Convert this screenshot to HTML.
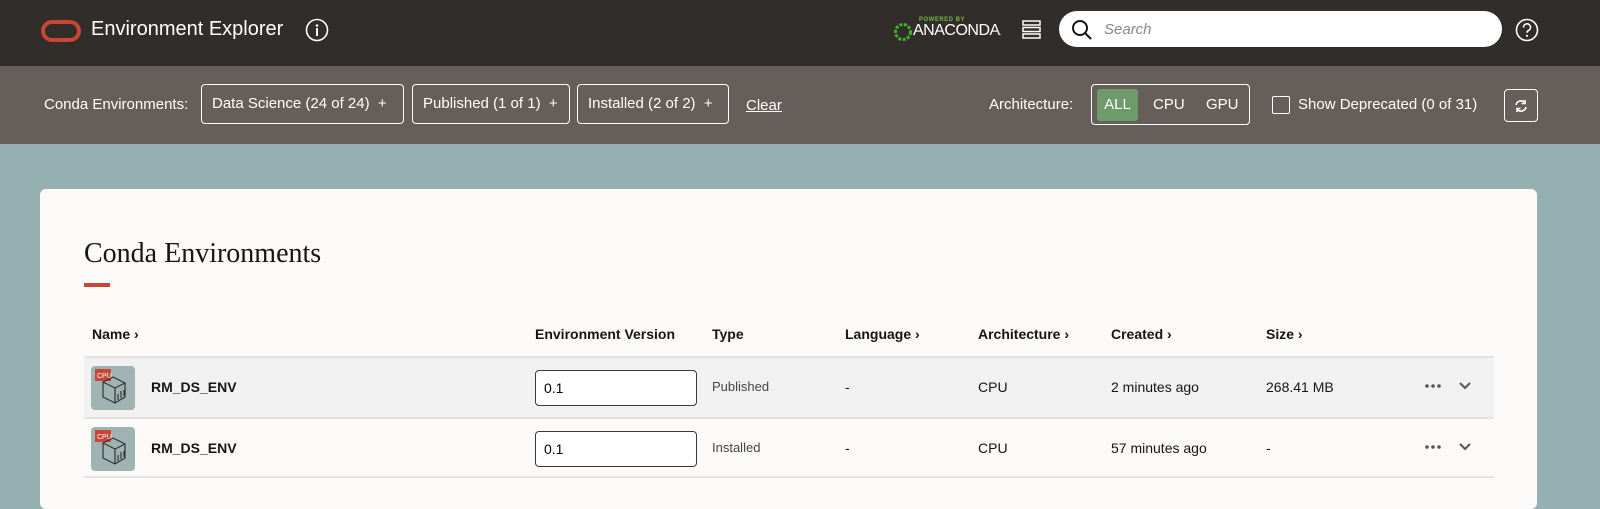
<!DOCTYPE html>
<html><head><meta charset="utf-8"><style>
*{box-sizing:border-box;margin:0;padding:0}
body{width:1600px;height:489px;overflow:hidden;background:#95b0b1;font-family:"Liberation Sans",sans-serif;position:relative}
.hdr{position:absolute;left:0;top:0;width:1600px;height:66px;background:#312d2a}
.fb{position:absolute;left:0;top:66px;width:1600px;height:78px;background:#665e59;color:#fff;font-size:15px}
.abs{position:absolute}
.chip{position:absolute;top:18px;height:40px;border:1.5px solid #fff;border-radius:4px;line-height:37px;padding:0 10px;font-size:15px;color:#fff;white-space:nowrap}
.card{position:absolute;left:40px;top:189px;width:1497px;height:320px;background:#fbfaf8;border-radius:6px}
.th{position:absolute;top:137px;font-size:14px;font-weight:bold;color:#161513}
.row{position:absolute;left:44px;width:1410px;height:61px;border-top:2px solid #e4e3e1}
.cell{position:absolute;font-size:14px;color:#161513;top:21px}
.ver{position:absolute;left:451px;top:12px;width:162px;height:36px;border:1px solid #3a3a3a;border-radius:4px;background:#fff;font-size:14px;line-height:34px;padding-left:8px}
.ico{position:absolute;left:7px;top:8px;width:44px;height:44px;background:#9fb3b3;border-radius:4px}
</style></head><body>
<div class="hdr">
 <svg class="abs" style="left:41px;top:20px" width="40" height="22"><rect x="2" y="2" width="36" height="18" rx="9" fill="none" stroke="#c74634" stroke-width="4"/></svg>
 <div class="abs" style="left:91px;top:18px;color:#fff;font-size:20px">Environment Explorer</div>
 <svg class="abs" style="left:305px;top:18px" width="24" height="24"><circle cx="12" cy="12" r="10.5" fill="none" stroke="#fff" stroke-width="1.6"/><circle cx="12" cy="7.5" r="1.3" fill="#fff"/><rect x="11" y="10" width="2" height="8" fill="#fff"/></svg>
 <svg class="abs" style="left:893px;top:20px" width="20" height="22"><circle cx="10" cy="12" r="7.5" fill="none" stroke="#43b02a" stroke-width="3" stroke-dasharray="3 1.5"/></svg>
 <div class="abs" style="left:919px;top:17px;color:#7ab93a;font-size:6px;font-weight:bold;letter-spacing:.5px">POWERED BY</div>
 <div class="abs" style="left:913px;top:22px;color:#fff;font-size:16px;letter-spacing:-.5px">ANACONDA<span style="font-size:6px">.</span></div>
 <svg class="abs" style="left:1021px;top:19px" width="22" height="22"><g fill="none" stroke="#fff" stroke-width="1.5"><rect x="2" y="2" width="17" height="4"/><rect x="2" y="8.5" width="17" height="4"/><rect x="2" y="15" width="17" height="4"/></g></svg>
 <div class="abs" style="left:1059px;top:11px;width:443px;height:36px;background:#fff;border-radius:18px"></div>
 <svg class="abs" style="left:1071px;top:19px" width="22" height="22"><circle cx="9" cy="9" r="7" fill="none" stroke="#161513" stroke-width="2"/><line x1="14" y1="14" x2="20" y2="20" stroke="#161513" stroke-width="2.2"/></svg>
 <div class="abs" style="left:1104px;top:21px;color:#8a8784;font-size:15px;font-style:italic">Search</div>
 <svg class="abs" style="left:1515px;top:18px" width="24" height="24"><circle cx="12" cy="12" r="10.5" fill="none" stroke="#fff" stroke-width="1.6"/><path d="M8.5 9.5a3.5 3.5 0 1 1 5 3c-1 .5-1.5 1-1.5 2.2" fill="none" stroke="#fff" stroke-width="1.6"/><circle cx="12" cy="17.8" r="1.1" fill="#fff"/></svg>
</div>
<div class="fb">
 <div class="abs" style="left:44px;top:30px">Conda Environments:</div>
 <div class="chip" style="left:201px;width:203px">Data Science (24 of 24) &nbsp;+</div>
 <div class="chip" style="left:412px;width:158px">Published (1 of 1) &nbsp;+</div>
 <div class="chip" style="left:577px;width:152px">Installed (2 of 2) &nbsp;+</div>
 <div class="abs" style="left:746px;top:31px;text-decoration:underline">Clear</div>
 <div class="abs" style="left:989px;top:30px">Architecture:</div>
 <div class="abs" style="left:1091px;top:18px;width:159px;height:41px;border:1.5px solid #fff;border-radius:4px"></div>
 <div class="abs" style="left:1097px;top:23px;width:41px;height:32px;background:#6f9a6a;border-radius:3px;text-align:center;line-height:32px">ALL</div>
 <div class="abs" style="left:1153px;top:30px">CPU</div>
 <div class="abs" style="left:1206px;top:30px">GPU</div>
 <div class="abs" style="left:1272px;top:30px;width:18px;height:18px;border:1.5px solid #fff;border-radius:2px"></div>
 <div class="abs" style="left:1298px;top:30px">Show Deprecated (0 of 31)</div>
 <div class="abs" style="left:1504px;top:23px;width:34px;height:33px;border:1.5px solid #fff;border-radius:4px"></div>
 <svg class="abs" style="left:1513px;top:32px" width="16" height="16"><path d="M3 7a5 5 0 0 1 9-2M13 9a5 5 0 0 1-9 2" fill="none" stroke="#fff" stroke-width="1.6"/><path d="M12 2v3.5H8.5M4 14v-3.5h3.5" fill="none" stroke="#fff" stroke-width="1.6"/></svg>
</div>
<div class="card">
 <div class="abs" style="left:44px;top:49px;font-family:'Liberation Serif',serif;font-size:28px;color:#161513">Conda Environments</div>
 <div class="abs" style="left:44px;top:94px;width:26px;height:4px;background:#c74634"></div>
 <div class="th" style="left:52px">Name ›</div>
 <div class="th" style="left:495px">Environment Version</div>
 <div class="th" style="left:672px">Type</div>
 <div class="th" style="left:805px">Language ›</div>
 <div class="th" style="left:938px">Architecture ›</div>
 <div class="th" style="left:1071px">Created ›</div>
 <div class="th" style="left:1226px">Size ›</div>
 <div class="row" style="top:167px;background:#f1f1f1">
  <div class="ico"><svg width="44" height="44"><rect x="4" y="3" width="16" height="12" fill="#c74634"/><text x="6" y="12" font-size="7" fill="#fff" font-family="Liberation Sans">CPU</text><g fill="none" stroke="#333" stroke-width="1.2"><path d="M12 16l10-5 12 6v14l-10 6-12-6z M12 16l12 6 10-5 M24 22v15"/><path d="M27 34v-6M30 32v-7M33 30v-6"/></g></svg></div>
  <div class="cell" style="left:67px;font-weight:bold">RM_DS_ENV</div>
  <div class="ver">0.1</div>
  <div class="cell" style="left:628px;font-size:13px;color:#444">Published</div>
  <div class="cell" style="left:761px">-</div>
  <div class="cell" style="left:894px">CPU</div>
  <div class="cell" style="left:1027px">2 minutes ago</div>
  <div class="cell" style="left:1182px">268.41 MB</div>
  <svg class="abs" style="left:1340px;top:25px" width="18" height="6"><g fill="#555"><circle cx="3" cy="3" r="1.8"/><circle cx="9" cy="3" r="1.8"/><circle cx="15" cy="3" r="1.8"/></g></svg>
  <svg class="abs" style="left:1374px;top:23px" width="14" height="10"><path d="M2 2l5 5 5-5" fill="none" stroke="#555" stroke-width="2"/></svg>
 </div>
 <div class="row" style="top:228px;border-bottom:2px solid #e4e3e1">
  <div class="ico"><svg width="44" height="44"><rect x="4" y="3" width="16" height="12" fill="#c74634"/><text x="6" y="12" font-size="7" fill="#fff" font-family="Liberation Sans">CPU</text><g fill="none" stroke="#333" stroke-width="1.2"><path d="M12 16l10-5 12 6v14l-10 6-12-6z M12 16l12 6 10-5 M24 22v15"/><path d="M27 34v-6M30 32v-7M33 30v-6"/></g></svg></div>
  <div class="cell" style="left:67px;font-weight:bold">RM_DS_ENV</div>
  <div class="ver">0.1</div>
  <div class="cell" style="left:628px;font-size:13px;color:#444">Installed</div>
  <div class="cell" style="left:761px">-</div>
  <div class="cell" style="left:894px">CPU</div>
  <div class="cell" style="left:1027px">57 minutes ago</div>
  <div class="cell" style="left:1182px">-</div>
  <svg class="abs" style="left:1340px;top:25px" width="18" height="6"><g fill="#555"><circle cx="3" cy="3" r="1.8"/><circle cx="9" cy="3" r="1.8"/><circle cx="15" cy="3" r="1.8"/></g></svg>
  <svg class="abs" style="left:1374px;top:23px" width="14" height="10"><path d="M2 2l5 5 5-5" fill="none" stroke="#555" stroke-width="2"/></svg>
 </div>
</div>
</body></html>
